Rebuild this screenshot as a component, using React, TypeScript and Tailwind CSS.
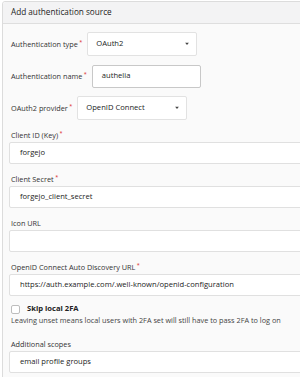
import React from 'react'

function Req() {
  return <span className="text-[#db2828] text-[5.5px] leading-none relative -top-[3px] ml-[1.5px]">*</span>
}

function Caret() {
  return (
    <svg width="4" height="3" viewBox="0 0 4 3" className="absolute right-[7px] top-1/2 -translate-y-1/2">
      <path d="M0 0h4L2 2.5z" fill="#444" />
    </svg>
  )
}

function InlineSelect({ label, value, w }: { label: string; value: string; w: string }) {
  return (
    <div className="flex items-center h-[24px] gap-[5px]">
      <label className="pl-[2px] text-[7.3px] text-[#333] whitespace-nowrap">
        {label}
        <Req />
      </label>
      <div className={`relative h-[24px] ${w} bg-white border border-[#e2e2e2] rounded-[2px] flex items-center pl-[8px] text-[7.6px] text-[#222]`}>
        {value}
        <Caret />
      </div>
    </div>
  )
}

function Field({ label, value, req = true }: { label: string; value?: string; req?: boolean }) {
  return (
    <div>
      <label className="block pl-[2px] mb-[1px] text-[7.3px] leading-[12px] text-[#333] whitespace-nowrap">
        {label}
        {req && <Req />}
      </label>
      <div className="h-[22px] bg-white border border-[#e0e0e0] rounded-[2px] flex items-center pl-[10px] text-[7.6px] text-[#222] whitespace-nowrap">
        {value}
      </div>
    </div>
  )
}

export default function App() {
  return (
    <div className="w-[300px] h-[377px] overflow-hidden bg-white font-['Open_Sans',sans-serif]">
      <div className="ml-[2px] mt-[1px] w-[420px] border border-[#dcdcdc] rounded-tl-[3px]">
        <div className="h-[22px] bg-[#f3f3f4] border-b border-[#dedede] pl-[8px] flex items-center text-[8.2px] text-[#222] rounded-tl-[3px]">
          Add authentication source
        </div>
        <div className="bg-[#fafafa] px-[6px] pt-[8px] pb-[20px]">
          <div className="flex flex-col gap-[8px]">
            <InlineSelect label="Authentication type" value="OAuth2" w="w-[110px]" />
            <div className="flex items-center h-[24px] gap-[5px]">
              <label className="pl-[2px] text-[7.3px] text-[#333] whitespace-nowrap">
                Authentication name
                <Req />
              </label>
              <div className="h-[23px] w-[109px] bg-white border border-[#c8c8c8] rounded-[2px] flex items-center pl-[9px] text-[7.6px] text-[#222]">
                authelia
              </div>
            </div>
            <InlineSelect label="OAuth2 provider" value="OpenID Connect" w="w-[110px]" />
          </div>
          <div className="mt-[9px] flex flex-col gap-[9px]">
            <Field label="Client ID (Key)" value="forgejo" />
            <Field label="Client Secret" value="forgejo_client_secret" />
            <Field label="Icon URL" req={false} />
            <Field label="OpenID Connect Auto Discovery URL" value="https://auth.example.com/.well-known/openid-configuration" />
          </div>
          <div className="mt-[7px] pl-[2px]">
            <div className="flex items-center gap-[7px] h-[12px]">
              <span className="w-[9px] h-[9px] bg-white border border-[#bdbdbd] rounded-[2px]" />
              <span className="text-[7.6px] font-bold text-[#222]">Skip local 2FA</span>
            </div>
            <div className="text-[7.3px] leading-[11px] text-[#444] whitespace-nowrap">
              Leaving unset means local users with 2FA set will still have to pass 2FA to log on
            </div>
          </div>
          <div className="mt-[12px]">
            <Field label="Additional scopes" value="email profile groups" req={false} />
          </div>
        </div>
      </div>
    </div>
  )
}
